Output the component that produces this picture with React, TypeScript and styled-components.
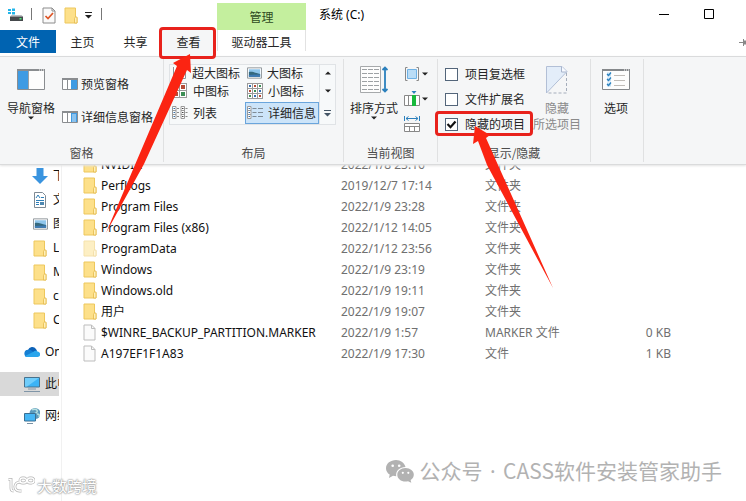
import React from "react";
import type { ReactNode } from "react";
import styled, { createGlobalStyle, css } from "styled-components";

const GlobalStyle = createGlobalStyle`
  * { box-sizing: border-box; }
  body {
    margin: 0;
    background: #fff;
    font-family: "Noto Sans CJK SC", sans-serif;
    font-size: 12px;
    line-height: 16px;
    color: #262626;
  }
  button { font: inherit; color: inherit; border: 0; padding: 0; background: none; white-space: nowrap; }
  svg { display: block; flex: none; }
`;

const Window = styled.div`
  position: relative;
  display: flex;
  flex-direction: column;
  height: 100vh;
  overflow: hidden;
`;

/* ---------- title bar and tabs ---------- */

const Header = styled.header`
  display: flex;
  height: 56px;
`;

const HeaderLeft = styled.div`
  display: flex;
  flex-direction: column;
  width: 217px;
`;

const QuickAccess = styled.div`
  display: flex;
  align-items: center;
  height: 30px;
  padding-left: 8px;
`;

const QuickButton = styled.button<{ $narrow?: boolean }>`
  display: flex;
  align-items: center;
  justify-content: center;
  width: ${(p) => (p.$narrow ? 12 : 22)}px;
  height: 22px;
`;

const QuickDivider = styled.span`
  width: 1px;
  height: 12px;
  margin: 0 6px 2px 7px;
  background: #777;
`;

const Tabs = styled.nav`
  display: flex;
  height: 26px;
`;

const Tab = styled.button<{ $kind?: "file" | "active" }>`
  position: relative;
  width: 53px;
  height: 24px;
  ${(p) => p.$kind === "file" && css`width: 56px; height: 23px; background: #0063b1; color: #fff;`}
  ${(p) => p.$kind === "active" && css`background: #f5f6f7; height: 26px; padding-bottom: 2px; z-index: 2;`}
`;

const RedFrame = styled.span`
  position: absolute;
  inset: -3px -1px -3px -3px;
  border: 3px solid #e8221c;
  border-radius: 4px;
  pointer-events: none;
`;

const ContextTab = styled.div`
  display: flex;
  flex-direction: column;
  width: 89px;
  padding-top: 3px;
`;

const ContextTitle = styled.div`
  height: 27px;
  line-height: 27px;
  text-align: center;
  background: #c4ef9e;
  color: #2f4a1e;
`;

const ContextButton = styled.button`
  height: 21px;
  padding-top: 3px;
  border: solid #e2e2e2;
  border-width: 0 1px;
`;

const Title = styled.h1`
  flex: 1;
  margin: 0;
  padding: 7px 0 0 13px;
  font: 12px/16px "Noto Sans", "Noto Sans CJK SC", sans-serif;
  color: #000;
`;

const WindowControls = styled.div`
  display: flex;
  flex-direction: column;
  align-items: flex-end;
`;

const ControlRow = styled.div`
  display: flex;
  height: 30px;
  padding-right: 15px;
`;

const ControlButton = styled.button`
  display: flex;
  align-items: center;
  justify-content: center;
  width: 45px;
  height: 28px;
`;

/* ---------- ribbon ---------- */

const Ribbon = styled.section`
  display: flex;
  flex: none;
  height: 109px;
  padding: 2px 0;
  background: #f5f6f7;
  border: solid #dadbdc;
  border-width: 1px 0;
  box-shadow: 0 1px 2px #e4e4e4;
  z-index: 1;
`;

const Group = styled.fieldset<{ $width: number }>`
  display: flex;
  flex-direction: column;
  width: ${(p) => p.$width}px;
  min-width: 0;
  margin: 0;
  padding: 0;
  border: 0;
  border-right: 1px solid #e0e1e2;
`;

const GroupBody = styled.div`
  display: flex;
  height: 84px;
`;

const GroupLabel = styled.div`
  text-align: center;
  color: #4c4c4c;
  padding-top: 2px;
`;

const LargeButton = styled.button<{ $width: number; $muted?: boolean }>`
  display: flex;
  flex-direction: column;
  align-items: center;
  flex: none;
  width: ${(p) => p.$width}px;
  color: ${(p) => (p.$muted ? "#8a8a8a" : "inherit")};
`;

const LargeIcon = styled.span`
  display: flex;
  align-items: center;
  height: 41px;
`;

const PaneColumn = styled.div`
  display: flex;
  flex-direction: column;
  gap: 17px;
  padding-top: 17px;
`;

const PaneButton = styled.button`
  display: flex;
  align-items: center;
  gap: 3px;
`;

const Gallery = styled.div`
  display: grid;
  grid-template-columns: 75px 74px 16px;
  grid-template-rows: 15px 22px 22px;
  height: 61px;
  margin: 5px 0 0 5px;
  border: 1px solid #e0e3e6;
  background: #f7f9fa;
`;

const GalleryItem = styled.button<{ $selected?: boolean }>`
  display: flex;
  align-items: center;
  gap: 5px;
  padding-left: 2px;
  ${(p) => p.$selected && css`background: #cce4f9; outline: 1px solid #6aa5dc; outline-offset: -1px;`}
`;

const GalleryScroll = styled.button`
  display: flex;
  align-items: center;
  justify-content: center;
  border-left: 1px solid #e0e3e6;
`;

const ToolColumn = styled.div`
  display: flex;
  flex-direction: column;
  gap: 9px;
  padding-top: 7px;
`;

const ToolButton = styled.button`
  display: flex;
  align-items: center;
  gap: 2px;
  height: 16px;
`;

const CheckColumn = styled.div`
  display: flex;
  flex-direction: column;
  align-items: flex-start;
  gap: 9px;
  width: 95px;
  padding: 7px 0 0 7px;
`;

const CheckLabel = styled.label`
  position: relative;
  display: flex;
  align-items: center;
  gap: 7px;
  white-space: nowrap;
  z-index: 1;
`;

const CheckBox = styled.input`
  appearance: none;
  width: 13px;
  height: 13px;
  margin: 0;
  border: 1px solid #53657a;
  background: #fff;
  &:checked {
    background: #fff url("data:image/svg+xml,%3Csvg xmlns='http://www.w3.org/2000/svg' viewBox='0 0 11 11'%3E%3Cpath d='M1.500 5l3 3.200L9.500 2.500' fill='none' stroke='%23111' stroke-width='2.200'/%3E%3C/svg%3E");
  }
`;

const CheckFrame = styled.span`
  position: absolute;
  inset: -5px -8px -4px -10px;
  border: 3px solid #e8221c;
  border-radius: 4px;
  pointer-events: none;
`;

/* ---------- body ---------- */

const Body = styled.main`
  display: flex;
  flex: 1;
  min-height: 0;
  margin-top: -1px;
  overflow: hidden;
`;

const Sidebar = styled.nav`
  flex: none;
  width: 62px;
  padding-right: 2px;
  border-right: 1px solid #f1f1f1;
`;

const SideLink = styled.a<{ $root?: boolean; $selected?: boolean }>`
  display: flex;
  align-items: center;
  gap: 5px;
  height: 24px;
  margin-bottom: ${(p) => (p.$root ? 8 : 0)}px;
  padding-left: ${(p) => (p.$root ? 24 : 32)}px;
  overflow: hidden;
  white-space: nowrap;
  font-family: "Noto Sans", "Noto Sans CJK SC", sans-serif;
  color: #111;
  text-decoration: none;
  background: ${(p) => (p.$selected ? "#d9d9d9" : "none")};
`;

const SideSection = styled.div`
  margin-bottom: 8px;
`;

const FileTable = styled.table`
  align-self: flex-start;
  width: 609px;
  margin-top: -10px;
  table-layout: fixed;
  border-collapse: collapse;
  font-family: "Noto Sans", "Noto Sans CJK SC", sans-serif;
  font-size: 12px;
`;

const Cell = styled.td<{ $name?: boolean; $right?: boolean }>`
  height: 21px;
  padding: 0;
  overflow: hidden;
  white-space: nowrap;
  text-align: ${(p) => (p.$right ? "right" : "left")};
  color: ${(p) => (p.$name ? "#111" : "#707070")};
`;

const FileName = styled.div`
  display: flex;
  align-items: center;
  gap: 4px;
  padding-left: 21px;
`;

const ColName = styled.col`width: 279px;`;
const ColDate = styled.col`width: 144px;`;
const ColType = styled.col`width: 120px;`;

/* ---------- overlays ---------- */

const Arrows = styled.svg`
  position: absolute;
  left: 0;
  top: 0;
  z-index: 3;
  pointer-events: none;
`;

const AccountMark = styled.div`
  position: absolute;
  right: 24px;
  bottom: 16px;
  display: flex;
  align-items: center;
  gap: 6px;
  font-size: 21px;
  line-height: 28px;
  color: #b2b2b2;
  white-space: nowrap;
`;

const Dot = styled.span`
  margin: 0 2px;
  font-family: "Noto Sans", sans-serif;
`;

const SiteMark = styled.div`
  position: absolute;
  left: 7px;
  bottom: 5px;
  display: flex;
  align-items: center;
  gap: 2px;
  font-size: 15px;
  line-height: 20px;
  color: #fff;
  text-shadow: 0 0 1px #999, 0 0 2px #999, 0 0 2px #aaa;
`;

/* ---------- icons ---------- */

const Caret = ({ up }: { up?: boolean }) => (
  <svg width="6" height="4" viewBox="0 0 6 4"><path d={up ? "M0 3.5L3 .5l3 3z" : "M0 .5h6L3 3.5z"} fill="#222" /></svg>
);

const CaretBar = ({ color = "#222" }: { color?: string }) => (
  <svg width="7" height="7" viewBox="0 0 7 7"><path d="M0 0h7v1H0zM0 3h7L3.500 6.500z" fill={color} /></svg>
);

const DriveIcon = () => (
  <svg width="16" height="14" viewBox="0 0 16 14">
    <path d="M0 1h3v2H0zM4 .5h3V3H4zM0 4h3v2H0zM4 4h3v2.500H4z" fill="#21b5ea" />
    <path d="M2 8.500l1.500-1.500h10L15 8.500z" fill="#b9bdc0" />
    <path d="M2 8.500h13V13H2z" fill="#45494c" />
    <path d="M11.500 10h2v1.500h-2z" fill="#4cf07c" />
  </svg>
);

const TickPageIcon = () => (
  <svg width="14" height="17" viewBox="0 0 14 17">
    <path d="M1 1h9l3 3v12H1z" fill="#fafafa" stroke="#8c8c8c" />
    <path d="M10 1v3h3" fill="none" stroke="#8c8c8c" />
    <path d="M3.500 9L6 11.500 11 6" fill="none" stroke="#dd5526" strokeWidth="1.700" />
  </svg>
);

const FolderIcon = ({ faded }: { faded?: boolean }) => (
  <svg width="14" height="17" viewBox="0 0 14 17" opacity={faded ? 0.5 : 1}>
    <path d="M1 1h10.500v9.500H13v5.500H1z" fill="#fde08a" stroke="#edc75c" />
    <path d="M10.500 11.500c0-.8.500-1.500 1.500-1.500h1v6h-2.500z" fill="#fff0b8" stroke="#e5b94a" strokeWidth=".8" />
  </svg>
);

const FileIcon = () => (
  <svg width="14" height="17" viewBox="0 0 14 17">
    <path d="M1 1h7.500L12 4.500V16H1z" fill="#fbfbfb" stroke="#bdbdbd" />
    <path d="M8.500 1v3.500H12" fill="none" stroke="#bdbdbd" />
  </svg>
);

const NavPaneIcon = () => (
  <svg width="28" height="21" viewBox="0 0 28 21">
    <path d="M.5 .5h27v20H.5z" fill="#fdfdfd" stroke="#8a8d90" />
    <path d="M0 0h28v2H0z" fill="#8a8d90" />
    <path d="M22 1h1M24 1h1M26 1h1" stroke="#fff" />
    <path d="M1 2h10v18H1z" fill="#3f9be3" />
    <path d="M11.500 2v18" stroke="#9ba0a4" />
  </svg>
);

const PaneIcon = ({ lines }: { lines?: boolean }) => (
  <svg width="16" height="12" viewBox="0 0 16 12">
    <path d="M.5 .5h15v11H.5z" fill="#fff" stroke="#8a8d90" />
    <path d="M0 0h16v2H0z" fill="#8a8d90" />
    <path d="M5.500 2v9" stroke="#8a8d90" />
    <path d="M9 2h6v9H9z" fill="#3f9be3" />
    {lines && <path d="M10 4h4M10 6h4M10 8h4M10 10h4" stroke="#fff" strokeWidth=".8" />}
  </svg>
);

const PictureIcon = () => (
  <svg width="15" height="12" viewBox="0 0 16 12">
    <path d="M.5 .5h15v11H.5z" fill="#fff" stroke="#8d9398" />
    <path d="M2 2h12v8H2z" fill="#8fc6ec" />
    <path d="M2 5c4-1 6 1 12 2v3H2z" fill="#35697e" />
    <path d="M2 8l12-.5V10H2z" fill="#3d7ab5" />
  </svg>
);

const LargePictureIcon = () => (
  <svg width="15" height="12" viewBox="0 0 15 12">
    <path d="M1.500 0v11.500h12V0" fill="#fff" stroke="#8d9398" />
    <path d="M4 2h7v7H4z" fill="#5d83a6" />
    <path d="M4 6l7 1v2H4z" fill="#2f5064" />
  </svg>
);

const TilesIcon = ({ count }: { count: 2 | 3 }) => {
  const step = count === 2 ? 7 : 5;
  const cells = Array.from({ length: count * count }, (_, i) => [i % count, Math.floor(i / count)]);
  const fills = ["#356eb1", "#b54b37", "#3c8f56"];
  return (
    <svg width="16" height="16" viewBox="0 0 16 16">
      {cells.map(([x, y], i) => (
        <g key={i}>
          <rect x={x * step + 0.5} y={y * step + 0.5} width={step} height={step} fill="#fff" stroke="#9a9a9a" />
          <rect x={x * step + 2} y={y * step + 2} width={step - 3} height={step - 3} fill={fills[(x + y) % 3]} />
        </g>
      ))}
    </svg>
  );
};

const ListIcon = ({ details }: { details?: boolean }) => (
  <svg width="16" height="14" viewBox="0 0 16 14">
    <path d="M.5 .5h3.500v12H.5zM.5 4.500H4M.5 8.500H4" fill="#fff" stroke="#9a9a9a" />
    <path d="M1.500 2.500H3M1.500 6.500H3M1.500 10.500H3" stroke="#336fa8" />
    {details ? (
      <path d="M5.500 2.500h4M11 2.500h5M5.500 6.500h4M11 6.500h5M5.500 10.500h4M11 10.500h5" stroke="#7f8b95" />
    ) : (
      <>
        <path d="M5 2.500h2M5 6.500h2M5 10.500h2M13.500 2.500h2M13.500 6.500h2M13.500 10.500h2" stroke="#888" />
        <path d="M9 .5h3.500v12H9zM9 4.500h3.500M9 8.500h3.500" fill="#fff" stroke="#9a9a9a" />
        <path d="M10 2.500h1.500M10 6.500h1.500M10 10.500h1.500" stroke="#444" />
      </>
    )}
  </svg>
);

const SortIcon = () => (
  <svg width="28" height="28" viewBox="0 0 28 28">
    <path d="M.5 .5h20v26H.5z" fill="#fdfdfd" stroke="#a6a9ab" />
    <path d="M2 3.500h17M2 7.500h17M2 11.500h17M2 15.500h17M2 19.500h17M2 23.500h17" stroke="#9da1a4" strokeDasharray="5 1" />
    <path d="M25 2v23M22.500 4L25 1.500 27.500 4M22.500 23l2.500 2.500 2.500-2.500" fill="none" stroke="#2b80bd" strokeWidth="1.800" />
  </svg>
);

const GroupByIcon = () => (
  <svg width="16" height="15" viewBox="0 0 16 15">
    <path d="M3.500 .5H1.500v13h2M12.500 .5h2v13h-2" fill="none" stroke="#888" />
    <path d="M3.500 2.500h9v9h-9z" fill="#b9dcf6" stroke="#6fb1e4" />
  </svg>
);

const AddColumnsIcon = () => (
  <svg width="16" height="16" viewBox="0 0 16 16">
    <path d="M.5 4.500h15v10H.5zM4.500 4.500v10" fill="#fff" stroke="#888" />
    <path d="M8 4h4v11H8z" fill="#18b93d" />
    <path d="M7.500 0h5L10 3z" fill="#2b80bd" />
  </svg>
);

const FitColumnsIcon = () => (
  <svg width="16" height="16" viewBox="0 0 16 16">
    <path d="M.5 0v5M15.500 0v5M2 2.500h12M4.500 .5L2 2.500l2.500 2M11.500 .5l2.500 2-2.500 2" fill="none" stroke="#2b80bd" />
    <path d="M.5 7.500h15v8H.5zM.5 10.500h15M5.500 10v5M10.500 10v5" fill="#fff" stroke="#888" />
  </svg>
);

const HidePageIcon = () => (
  <svg width="22" height="28" viewBox="0 0 22 28">
    <path d="M.5 27V.5H16l5 5L.5 27z" fill="#e3edf9" stroke="#b2bfd6" />
    <path d="M15.500 .5v5.500H21" fill="#f7faff" stroke="#a8b5cc" />
    <path d="M20.500 7v20H1" fill="none" stroke="#a5adbb" strokeDasharray="3 2" />
  </svg>
);

const OptionsIcon = () => (
  <svg width="28" height="21" viewBox="0 0 28 21">
    <path d="M.5 .5h27v20H.5z" fill="#fdfdfd" stroke="#85888b" />
    <path d="M0 0h28v2H0z" fill="#85888b" />
    <path d="M22 1h1M24 1h1M26 1h1" stroke="#fff" />
    <path d="M5 3.500h4v4H5zM5 8.500h4v4H5zM5 13.500h4v4H5z" fill="#c3e0f5" />
    <path d="M5 5l1.500 1.500L9 3.500M5 10l1.500 1.500L9 8.500M5 15l1.500 1.500L9 13.500" fill="none" stroke="#2b80bd" strokeWidth="1.200" />
    <path d="M12 6.500h11M12 11.500h11M12 16.500h11" stroke="#c0bcb8" />
  </svg>
);

const DownloadIcon = () => (
  <svg width="16" height="16" viewBox="0 0 16 16"><path d="M4.500 0h7v8H16l-8 8-8-8h4.500z" fill="#3a94df" /></svg>
);

const DocumentIcon = () => (
  <svg width="16" height="16" viewBox="0 0 16 16">
    <path d="M2.500 .5h8l3 3v12h-11z" fill="#fff" stroke="#7e8a94" />
    <path d="M4 6l2-3 2 3M9 5.500h3M4 8.500h8M4 10.500h3M4 12.500h3" fill="none" stroke="#2f7fb8" />
    <path d="M8 10h4v3H8z" fill="#4f88b0" />
  </svg>
);

const CloudIcon = () => (
  <svg width="16" height="16" viewBox="0 0 16 16">
    <path d="M4 6a4.500 4.500 0 0 1 8-1l1 2-8 3-4-1c0-2 1-3 3-3z" fill="#0c62b8" />
    <path d="M3 6c2-.7 4 0 5 1l5 4-10 2C0 13-1 7 3 6z" fill="#157ed3" />
    <path d="M9 8c2-2 4-1.500 4.500-.5C17 8 17 13 13.500 13H3c-1 0-1.500-.5-2-1z" fill="#2aa5ec" />
  </svg>
);

const ComputerIcon = () => (
  <svg width="16" height="16" viewBox="0 0 16 16">
    <path d="M.5 1.500h15v9.500H.5z" fill="#3bb3f5" stroke="#47728e" />
    <path d="M1 2h14L3 10.500H1z" fill="#70cdfb" />
    <path d="M4 13h8M0 15.500h16" stroke="#8095a7" />
  </svg>
);

const NetworkIcon = () => (
  <svg width="16" height="16" viewBox="0 0 16 16">
    <circle cx="11" cy="5.500" r="5.500" fill="#5b9abc" />
    <path d="M8 2c3-2 6 0 5 2s-4 1-5 4M13 6c2 0 3 1 2 3" fill="none" stroke="#b6dfdf" strokeWidth="1.500" />
    <path d="M.5 5.500h11v7.500H.5z" fill="#45b6f4" stroke="#3a6f92" />
    <path d="M3 15.500h6" stroke="#7891a4" />
  </svg>
);

const ChatIcon = () => (
  <svg width="28" height="24" viewBox="0 0 28 24">
    <path d="M10 1C4.500 1 0 4.600 0 9.200c0 2.600 1.400 4.900 3.700 6.400L3 19l4-2.200c1 .3 2 .4 3.200.4C9.500 11.500 14 8 19.500 8 18.500 4 14.700 1 10 1z" fill="#b2b2b2" />
    <path d="M19.500 9c-4.700 0-8.200 3-8.200 6.700 0 3.800 3.500 6.800 8.200 6.800.9 0 1.700-.1 2.500-.3l3.300 1.600-.7-2.800c2-1.300 3.200-3.200 3.200-5.300C27.800 12 24.200 9 19.500 9z" fill="#b2b2b2" />
    <circle cx="6.700" cy="6.800" r="1.300" fill="#fff" /><circle cx="13.200" cy="6.800" r="1.300" fill="#fff" />
    <circle cx="16.800" cy="13.800" r="1.100" fill="#fff" /><circle cx="22.300" cy="13.800" r="1.100" fill="#fff" />
  </svg>
);

const SiteLogo = () => {
  const d = "M1.500 3.500H4V12c0 2 .5 3 2.500 3M13.500 6C6.500 5.500 6 15 12.500 15h2M15.500 2h1.500a2.500 2.500 0 0 1 0 5h-1.500a2.500 2.500 0 0 1 0-5zM23 2h1.500a2.500 2.500 0 0 1 0 5H23a2.500 2.500 0 0 1 0-5z";
  return (
    <svg width="28" height="20" viewBox="0 0 28 20" fill="none">
      <path d={d} stroke="#b4b4b4" strokeWidth="2.800" />
      <path d={d} stroke="#fff" strokeWidth="1.400" />
    </svg>
  );
};

/* ---------- data ---------- */

type Entry = { name: string; date: string; type: string; size?: string; faded?: boolean };

const entries: Entry[] = [
  { name: "NVIDIA", date: "2022/1/8 23:16", type: "文件夹" },
  { name: "PerfLogs", date: "2019/12/7 17:14", type: "文件夹" },
  { name: "Program Files", date: "2022/1/9 23:28", type: "文件夹" },
  { name: "Program Files (x86)", date: "2022/1/12 14:05", type: "文件夹" },
  { name: "ProgramData", date: "2022/1/12 23:56", type: "文件夹", faded: true },
  { name: "Windows", date: "2022/1/9 23:19", type: "文件夹" },
  { name: "Windows.old", date: "2022/1/9 19:11", type: "文件夹" },
  { name: "用户", date: "2022/1/9 19:07", type: "文件夹" },
  { name: "$WINRE_BACKUP_PARTITION.MARKER", date: "2022/1/9 1:57", type: "MARKER 文件", size: "0 KB" },
  { name: "A197EF1F1A83", date: "2022/1/9 17:30", type: "文件", size: "1 KB" },
];

const quickLinks: { label: string; icon: ReactNode }[] = [
  { label: "下载", icon: <DownloadIcon /> },
  { label: "文档", icon: <DocumentIcon /> },
  { label: "图片", icon: <PictureIcon /> },
  { label: "L", icon: <FolderIcon /> },
  { label: "M", icon: <FolderIcon /> },
  { label: "c", icon: <FolderIcon /> },
  { label: "C", icon: <FolderIcon /> },
];

const SideIcon = styled.span`
  display: flex;
  justify-content: center;
  flex: none;
  width: 16px;
`;

export default function App() {
  return (
    <Window>
      <GlobalStyle />
      <Header>
        <HeaderLeft>
          <QuickAccess>
            <DriveIcon />
            <QuickDivider />
            <QuickButton aria-label="属性"><TickPageIcon /></QuickButton>
            <QuickButton aria-label="新建文件夹"><FolderIcon /></QuickButton>
            <QuickButton $narrow aria-label="自定义快速访问工具栏"><CaretBar /></QuickButton>
            <QuickDivider />
          </QuickAccess>
          <Tabs>
            <Tab $kind="file">文件</Tab>
            <Tab>主页</Tab>
            <Tab>共享</Tab>
            <Tab $kind="active">查看<RedFrame /></Tab>
          </Tabs>
        </HeaderLeft>
        <ContextTab>
          <ContextTitle>管理</ContextTitle>
          <ContextButton>驱动器工具</ContextButton>
        </ContextTab>
        <Title>系统 (C:)</Title>
        <WindowControls>
          <ControlRow>
            <ControlButton aria-label="最小化"><svg width="10" height="10"><path d="M0 5.500h10" stroke="#000" /></svg></ControlButton>
            <ControlButton aria-label="最大化"><svg width="10" height="10"><path d="M.5 .5h9v9h-9z" fill="none" stroke="#000" /></svg></ControlButton>
          </ControlRow>
          <button aria-label="固定功能区"><svg width="7" height="24"><path d="M0 12.500h4M4.500 9v7M4 11h3v3H4" fill="#888" stroke="#888" /></svg></button>
        </WindowControls>
      </Header>

      <Ribbon>
        <Group $width={164}>
          <GroupBody>
            <LargeButton $width={62}><LargeIcon><NavPaneIcon /></LargeIcon>导航窗格<Caret /></LargeButton>
            <PaneColumn>
              <PaneButton><PaneIcon />预览窗格</PaneButton>
              <PaneButton><PaneIcon lines />详细信息窗格</PaneButton>
            </PaneColumn>
          </GroupBody>
          <GroupLabel>窗格</GroupLabel>
        </Group>

        <Group $width={180}>
          <GroupBody>
            <Gallery>
              <GalleryItem><LargePictureIcon />超大图标</GalleryItem>
              <GalleryItem><PictureIcon />大图标</GalleryItem>
              <GalleryScroll aria-label="向上"><Caret up /></GalleryScroll>
              <GalleryItem><TilesIcon count={2} />中图标</GalleryItem>
              <GalleryItem><TilesIcon count={3} />小图标</GalleryItem>
              <GalleryScroll aria-label="向下"><Caret /></GalleryScroll>
              <GalleryItem><ListIcon />列表</GalleryItem>
              <GalleryItem $selected><ListIcon details />详细信息</GalleryItem>
              <GalleryScroll aria-label="更多"><CaretBar color="#456" /></GalleryScroll>
            </Gallery>
          </GroupBody>
          <GroupLabel>布局</GroupLabel>
        </Group>

        <Group $width={94}>
          <GroupBody>
            <LargeButton $width={60}><LargeIcon><SortIcon /></LargeIcon>排序方式<Caret /></LargeButton>
            <ToolColumn>
              <ToolButton aria-label="分组依据"><GroupByIcon /><Caret /></ToolButton>
              <ToolButton aria-label="添加列"><AddColumnsIcon /><Caret /></ToolButton>
              <ToolButton aria-label="将所有列调整为合适的大小"><FitColumnsIcon /></ToolButton>
            </ToolColumn>
          </GroupBody>
          <GroupLabel>当前视图</GroupLabel>
        </Group>

        <Group $width={153}>
          <GroupBody>
            <CheckColumn>
              <CheckLabel><CheckBox type="checkbox" />项目复选框</CheckLabel>
              <CheckLabel><CheckBox type="checkbox" />文件扩展名</CheckLabel>
              <CheckLabel><CheckBox type="checkbox" defaultChecked />隐藏的项目<CheckFrame /></CheckLabel>
            </CheckColumn>
            <LargeButton $width={48} $muted><LargeIcon><HidePageIcon /></LargeIcon><span>隐藏</span><span>所选项目</span></LargeButton>
          </GroupBody>
          <GroupLabel>显示/隐藏</GroupLabel>
        </Group>

        <Group $width={53}>
          <GroupBody>
            <LargeButton $width={50}><LargeIcon><OptionsIcon /></LargeIcon>选项</LargeButton>
          </GroupBody>
        </Group>
      </Ribbon>

      <Body>
        <Sidebar>
          <SideSection>
            {quickLinks.map((l, i) => (
              <SideLink key={i} href="#"><SideIcon>{l.icon}</SideIcon>{l.label}</SideLink>
            ))}
          </SideSection>
          <SideLink $root href="#"><CloudIcon />OneDrive</SideLink>
          <SideLink $root $selected href="#"><ComputerIcon />此电脑</SideLink>
          <SideLink $root href="#"><NetworkIcon />网络</SideLink>
        </Sidebar>
        <FileTable>
          <colgroup><ColName /><ColDate /><ColType /><col /></colgroup>
          <tbody>
            {entries.map((e) => (
              <tr key={e.name}>
                <Cell $name><FileName>{e.size ? <FileIcon /> : <FolderIcon faded={e.faded} />}{e.name}</FileName></Cell>
                <Cell>{e.date}</Cell>
                <Cell>{e.type}</Cell>
                <Cell $right>{e.size}</Cell>
              </tr>
            ))}
          </tbody>
        </FileTable>
      </Body>

      <AccountMark><ChatIcon /><span>公众号<Dot> · </Dot>CASS软件安装管家助手</span></AccountMark>
      <SiteMark><SiteLogo />大数跨境</SiteMark>
      <Arrows width="560" height="300" viewBox="0 0 560 300" aria-hidden="true">
        <path d="M190 54l1 19-4-3-43 94-38 69 71-167-4-3z" fill="#fb2412" />
        <path d="M475 126l15 9-4 3 12 27 55 123-66-123-9-24-5 3z" fill="#fb2412" />
      </Arrows>
    </Window>
  );
}
